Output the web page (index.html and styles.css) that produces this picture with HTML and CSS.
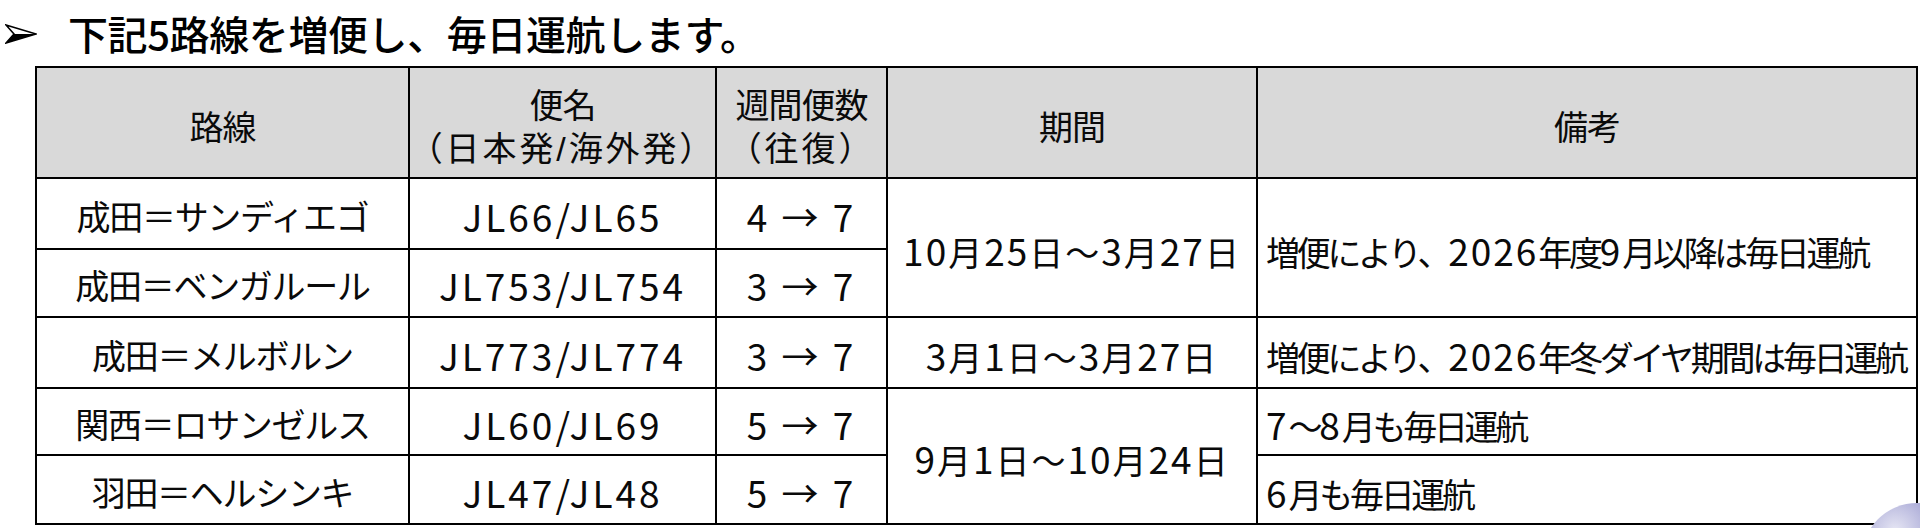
FILE: index.html
```html
<!DOCTYPE html>
<html lang="ja">
<head>
<meta charset="utf-8">
<title>増便</title>
<link rel="stylesheet" href="styles.css">
</head>
<body>
<div class="page">
  <div class="title">
    <svg class="bullet" viewBox="0 0 32 20" width="32" height="20" aria-hidden="true">
      <path d="M1 1 L31 10 L1 19 L9 10 Z" fill="#fff" stroke="#000" stroke-width="1.6" stroke-linejoin="miter"/>
      <path d="M9 10 L31 10 L1 19 Z" fill="#000"/>
    </svg>
    <h1 class="title-text">下記5路線を増便し、毎日運航します。</h1>
  </div>
  <table class="routes">
    <colgroup>
      <col class="c-route">
      <col class="c-flight">
      <col class="c-freq">
      <col class="c-period">
      <col class="c-note">
    </colgroup>
    <thead>
      <tr class="head">
        <th><span class="line">路線</span></th>
        <th><span class="line">便名</span><span class="line sub">（日本発/海外発）</span></th>
        <th><span class="line">週間便数</span><span class="line sub">（往復）</span></th>
        <th><span class="line">期間</span></th>
        <th><span class="line">備考</span></th>
      </tr>
    </thead>
    <tbody>
      <tr class="r1">
        <td>成田＝サンディエゴ</td>
        <td class="lat">JL66/JL65</td>
        <td class="lat">4 → 7</td>
        <td rowspan="2" class="period"><span class="n">10</span>月<span class="n">25</span>日～<span class="n">3</span>月<span class="n">27</span>日</td>
        <td rowspan="2" class="note">増便により、<span class="n">2026</span>年度<span class="n">9</span>月以降は毎日運航</td>
      </tr>
      <tr class="r2">
        <td>成田＝ベンガルール</td>
        <td class="lat">JL753/JL754</td>
        <td class="lat">3 → 7</td>
      </tr>
      <tr class="r3">
        <td>成田＝メルボルン</td>
        <td class="lat">JL773/JL774</td>
        <td class="lat">3 → 7</td>
        <td class="period"><span class="n">3</span>月<span class="n">1</span>日～<span class="n">3</span>月<span class="n">27</span>日</td>
        <td class="note">増便により、<span class="n">2026</span>年冬ダイヤ期間は毎日運航</td>
      </tr>
      <tr class="r4">
        <td>関西＝ロサンゼルス</td>
        <td class="lat">JL60/JL69</td>
        <td class="lat">5 → 7</td>
        <td rowspan="2" class="period"><span class="n">9</span>月<span class="n">1</span>日～<span class="n">10</span>月<span class="n">24</span>日</td>
        <td class="note"><span class="n">7</span>～<span class="n">8</span>月も毎日運航</td>
      </tr>
      <tr class="r5">
        <td>羽田＝ヘルシンキ</td>
        <td class="lat">JL47/JL48</td>
        <td class="lat">5 → 7</td>
        <td class="note"><span class="n">6</span>月も毎日運航</td>
      </tr>
    </tbody>
  </table>
  <div class="orb" aria-hidden="true"></div>
</div>
</body>
</html>
```

FILE: styles.css
```css
html, body {
  margin: 0;
  padding: 0;
  background: #ffffff;
}

body {
  width: 1920px;
  height: 528px;
  overflow: hidden;
  font-family: "Noto Sans CJK JP", "Noto Sans", sans-serif;
  color: #000000;
}

.page {
  position: relative;
  width: 1920px;
  height: 528px;
  overflow: hidden;
}

.title {
  display: flex;
  align-items: center;
  height: 66px;
  padding-left: 5px;
  box-sizing: border-box;
}

.bullet {
  display: block;
  flex: none;
  margin-top: 2px;
}

.title-text {
  margin: 0 0 0 31px;
  font-size: 40px;
  font-weight: 500;
  letter-spacing: -0.4px;
  line-height: 1;
  color: #000000;
}

.routes {
  margin-left: 35px;
  border-collapse: collapse;
  table-layout: fixed;
  width: 1881px;
  font-size: 34px;
  letter-spacing: -1.3px;
  line-height: 1.25;
  text-spacing-trim: space-all;
  color: #0a0a0a;
}

.c-route { width: 373px; }
.c-flight { width: 307px; }
.c-freq { width: 171px; }
.c-period { width: 370px; }
.c-note { width: 660px; }

.routes th,
.routes td {
  border: 2px solid #000000;
  padding: 5px 6px 0;
  text-align: center;
  vertical-align: middle;
  white-space: nowrap;
  font-weight: 400;
}

.routes th {
  background: #d9d9d9;
  padding-top: 11px;
  letter-spacing: -1px;
  font-family: "Liberation Sans", "Noto Sans CJK JP", sans-serif;
  font-feature-settings: "halt";
}

.routes th .line {
  display: block;
  height: 43px;
  line-height: 43px;
}

.routes th .sub {
  letter-spacing: 2.9px;
}

.head { height: 111px; }
.r1 { height: 71px; }
.r2 { height: 68px; }
.r3 { height: 71px; }
.r4 { height: 67px; }
.r5 { height: 69px; }

.routes td.lat {
  font-size: 37px;
  letter-spacing: 3px;
}

.routes td.period {
  letter-spacing: 2px;
}

.routes td.note {
  text-align: left;
  padding-left: 8px;
  letter-spacing: -3.3px;
}

.routes .n {
  font-size: 37px;
  letter-spacing: 2px;
}

.orb {
  position: absolute;
  left: 1862px;
  top: 503px;
  width: 110px;
  height: 110px;
  border-radius: 50%;
  background: radial-gradient(circle at 30% 25%, #e6e6f4 0%, #a9a9d6 35%, #5b5ba8 70%, #34348a 100%);
}
```
